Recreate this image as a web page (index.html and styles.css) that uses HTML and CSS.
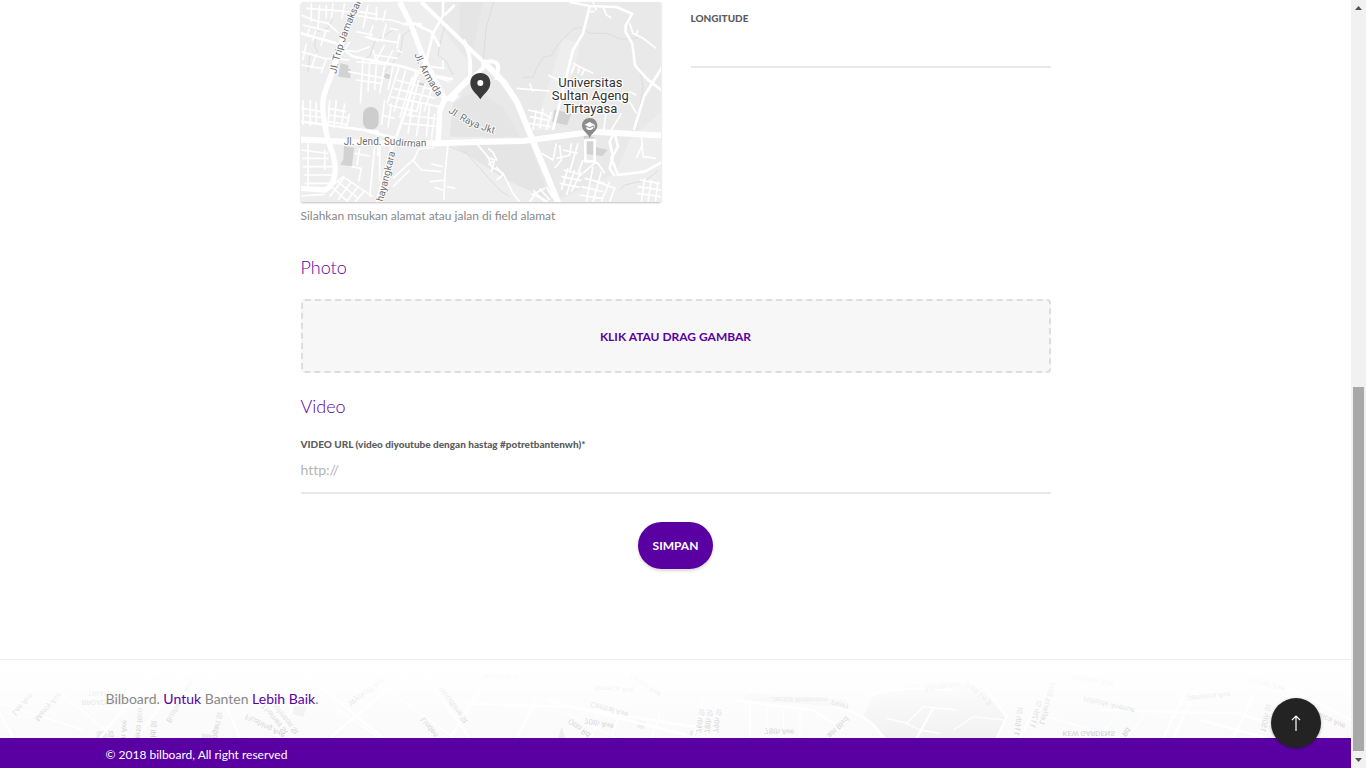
FILE: index.html
```html
<!DOCTYPE html>
<html lang="id">
<head>
<meta charset="utf-8">
<meta name="viewport" content="width=device-width, initial-scale=1">
<title>Bilboard</title>
<link rel="stylesheet" href="styles.css">
</head>
<body>
<div class="page">
  <main class="main">
    <form class="form">
      <div class="location">
        <div class="location-map">
          <svg class="map" viewBox="14 6 1080 600" preserveAspectRatio="xMidYMid slice" role="img" aria-label="Peta lokasi">
            <defs>
              <path id="p-trip" d="M120 222 Q140 118 195 6L213 -40"/>
              <path id="p-armada" d="M354 164 Q375 221 421 287L436 315"/>
              <path id="p-raya" d="M455 336 Q520 384 604 404L620 407"/>
              <path id="p-sud" d="M142 435 H290 L345 440 L420 436"/>
              <path id="p-bhay" d="M259 606 Q278 540 300 440L303 420"/>
            </defs>
            <rect x="10" y="6" width="1090" height="610" fill="#eee"/>
            <path fill="#e9e9e9" d="M375 6H1100V330L1000 420 960 520 760 610 480 330 520 190Z"/>
            <path fill="#e5e5e5" d="M490 6h70l-30 150-40-30zM470 310l70-40 80 50 50 90-210 0zM460 430h240l60 170-130-60z"/>
            <path fill="#eee" d="M800 115l50 15-15 80-50 90-10 90h-60z"/>
            <path fill="#d2d2d2" d="M132 190l24 5v12h6v28l-36-5zM268 220l16 5-4 13-20-5zM362 246l22 4-4 14-20-4zM143 438l30 5-6 56-36-5 10-15zM775 328l50 14-13 34-45-10zM862 402l32 10v28l40 10-16 18-52-6z"/>
            <rect x="200" y="321" width="47" height="68" rx="23" fill="#cdcdcd"/>
            <g class="water">
              <path d="M110 55l-15 30-35 10-5 45 10 15-25 15-5 45M290 90l-55 35-15 45-35 10M370 70l-50 35-8 55-45 55M450 65l-15 50-10 50 25 20 20 40"/>
              <path d="M592 6l-22 75-10 100M680 232l30 0 10-25 20-35 25-5 20-35 45-45 25-5 25 18 50 0 45 18 50-5M460 440l50 20 100 110 30 20M970 570l15-15 65-15 35-28M1030 200l10 60-20 130"/>
            </g>
            <g class="minor">
              <path d="M15 45l35 15 45 10 30 28M30 25l130 10M45 10v55M70 15l-5 70M90 15v40M110 10l-5 45M145 10l-8 45M20 75l80 20M40 85l-10 25M60 92l-12 30M88 95l-15 42M175 45l55 10 55 5 50 15M215 15l-15 70M240 20v42M268 30l-8 35M230 75l-12 40 30 8M270 70l-14 55M205 110l40 8 60 10M310 100l-8 45M180 95l50 10M185 35l60 8M280 85l25 5"/>
              <path d="M15 155l70 20 75 5M30 130l-10 50M60 160l-15 45M90 175l-16 45M15 195l60 10M135 150l45 5 40-15M160 125l-25 40M180 185l90 8M200 180l-8 130M220 190l-5 85M240 195l-5 75M265 195l-15 85M290 200l-15 70M155 215l110 20M180 240l75 10M230 150l10 35M265 135l-25 45M290 150l-20 40M235 165l70 10M300 150l20 8"/>
              <path d="M308 200l-35 110M328 210l-35 125M348 230l-38 125M368 240l-30 105M388 250l-28 85M408 260l-25 75M300 240l115 30M292 265l125 30M283 290l145 30M275 315l90 20M380 225l40 45M360 210l-15 45M400 200l45 5M400 225l60 20M440 180v25"/>
              <path d="M15 325l60 10M18 345l62 8M20 300v75M42 300v78M60 305v70M95 325l55 10M95 345l60 8M100 300l-5 80M120 300l-8 85M145 310l-10 72M95 365l55 8M160 340l-10 45M265 300l-10 75M285 310l-10 72M255 345l40 10M330 345l100 12M320 370l110 10M350 310l-15 90M375 310l-15 100M400 310l-10 100M415 340l-10 80"/>
              <path d="M15 450l80 10M18 475h80M20 500h90M22 525h94M25 550h80M35 430v135M85 450v60M15 588l70-5M130 380l115 14v75M235 440l-15 150M190 445l-8 50M165 500l30 5-8 40M175 460l45 8M250 435v110M270 545l-15 40M290 535l65-60 12-28 45-5M350 480l25 30 60 5M290 560l50-50M455 435l-8 75-5 90M440 500l-35-8M450 540l-50 5M440 570l-25-8M452 560l25 5"/>
              <path d="M85 575l55-45 90 60M125 545l60 50M145 530l-45 60M165 545l-40 55M185 560l-35 45M205 572l-30 35M105 560l50 45"/>
              <path d="M540 430l35 40 10 30 35 20 30 60 20 25M570 470l25 10-10 35M600 500l20 25-20 15M575 445l15 12 12 25M575 495l15-12M700 605l15-20 40 20M710 570l35 35M730 565l30 35M750 560l20 35M706 585l40-20"/>
              <path d="M695 330l45 10 25 15M700 350l60 12M698 370l65 10M720 330l-10 60M740 325l-10 60M765 335l-15 55M780 430l-10 50-35-20M790 435l5 45-20 25M825 430l-5 35-40 10M845 430l-25 85M800 450l45 10M870 480l35 10 20 30M860 480l-15 40"/>
              <path d="M802 510l55 15M795 530l60 12M790 550l60 12M815 505l-20 65M835 510l-25 75M855 515l-30 60M865 535l60 15M855 560l65 15M850 585l70 10M890 500l-20 105M915 515l-25 90M940 545l-25 60M860 520l40-35M900 545l55 20-15 40M1030 540l60 10M1025 560l70 10M1022 580l72 10M1045 535l-10 70M1065 540l-10 65M1085 545l-8 60"/>
              <path d="M755 225l50 25 35-10M660 265l100 8M700 250l10 25M830 190l20 10 40 20M835 195l-10 25M850 200l-5 20M865 208l-10 18M1000 70l10 30 30 15 40 30M1020 105l5-15M920 20l10 25 15 8M890 6l10 25M880 35h15M1035 405l5 65 40 5M1040 430l-20 45M960 300l40 5 20 35M1000 275l20 10M930 330l-8 60M975 340l-30 50"/>
            </g>
            <g class="road">
              <path d="M10 99l110 31 50 40 150 30 80 25 70 13M440 6v40l-30 55-20 80-32 50-30 100-28 80-20 50-40 150M10 364l190 26 100 25M445 45l30-30"/>
              <path d="M378 72h-60M350 70l55 25 25 45M458 295l-35 30M485 285l-20 20"/>
              <path d="M820 6l60 12 80 3 48 20-20 35 0 20 20 35 8 65 35 40 45 35M880 20l-20 80-30 50-20 80-40 160M1098 200l-55 90-30 100M955 400l10 40-20 35 20 50 80-10 55-30M955 395l-15 30 10 45-10 35 15 22"/>
              <rect x="867" y="420" width="28" height="64"/>
            </g>
            <g class="road road-wide">
              <path d="M188 6C155 75 130 130 112 205 90 270 72 290 82 350 90 410 95 420 112 470 125 530 108 560 85 570L10 565"/>
              <path d="M310 6l35 70 35 95 65 125-15 40-5 95"/>
            </g>
            <g class="road road-ramp">
              <path d="M500 120q28 40 20 110l-65 65M570 195l-115 105"/>
              <path d="M560 204q0-20 25-20 22 2 21 22-2 16-20 12M605 205l-5 35"/>
            </g>
            <path class="road road-ramp" d="M375 6l197 190"/>
            <path class="road road-main" d="M560 184l62 62 40 60 45 110 80 196"/>
            <path class="road road-main" d="M10 418l230 12h190l110-4 140-3 210-28 210 12"/>
            <g class="street">
              <text><textPath href="#p-trip">Jl. Trip Jamaksari</textPath></text>
              <text><textPath href="#p-armada">Jl. Armada</textPath></text>
              <text><textPath href="#p-raya">Jl. Raya Jkt</textPath></text>
              <text><textPath href="#p-sud">Jl. Jend. Sudirman</textPath></text>
              <text><textPath href="#p-bhay">hayangkara</textPath></text>
            </g>
            <g class="place">
              <text x="882" y="260">Universitas</text>
              <text x="882" y="299">Sultan Ageng</text>
              <text x="882" y="338">Tirtayasa</text>
            </g>
            <path fill="#8c8c8c" d="M880 354c-14 0-23 10-23 23 0 16 18 22 23 37 5-15 23-21 23-37 0-13-9-23-23-23z"/>
            <path fill="#fff" d="M880 366l-15 8 15 8 12-6v9h3v-11zM870 380v6q10 8 20 0v-6l-10 5z"/>
            <path fill="#3a3a3a" d="M552 219c-18 0-30 13-30 30 0 22 21 33 30 49 9-16 30-27 30-49 0-17-12-30-30-30z"/>
            <circle cx="552" cy="249" r="9" fill="#fff"/>
          </svg>
          <p class="hint">Silahkan msukan alamat atau jalan di field alamat</p>
        </div>
        <div class="field location-field">
          <label class="label" for="longitude">LONGITUDE</label>
          <input class="input" id="longitude" type="text">
        </div>
      </div>

      <h2 class="heading">Photo</h2>
      <button class="dropzone" type="button">KLIK ATAU DRAG GAMBAR</button>

      <h2 class="heading">Video</h2>
      <div class="field">
        <label class="label" for="video">VIDEO URL (video diyoutube dengan hastag #potretbantenwh)*</label>
        <input class="input" id="video" type="text" placeholder="http://">
      </div>
      <button class="submit" type="submit">SIMPAN</button>
    </form>
  </main>

  <footer class="footer">
    <div class="footer-top">
      <svg class="footer-map" viewBox="0 30 4053 234" preserveAspectRatio="xMidYMax slice" aria-hidden="true">
        <defs>
          <linearGradient id="fade" x1="0" y1="0" x2="0" y2="1">
            <stop offset="0" stop-color="#fff" stop-opacity="1"/>
            <stop offset="0.3" stop-color="#fff" stop-opacity="0.85"/>
            <stop offset="1" stop-color="#fff" stop-opacity="0"/>
          </linearGradient>
        </defs>
        <rect y="30" width="4053" height="234" fill="#fafafa"/>
        <path fill="#f1f1f1" d="M2620 140q80-40 220-45l110 20 70 90-30 59h-330l-70-65zM2240 130l300 20-10 20-300-20z"/>
        <path fill="#ebebeb" d="M290 243h30v21h-30zM605 250l35 5-5 9h-30zM880 165l40 5-10 30-30-8zM1685 228l10 36h-20zM1915 212l22 6-6 20-20-6zM2072 240l20 5-5 14-20-5z"/>
        <g class="footer-roads">
          <path d="M0 190l40 74M300 264l190-234M560 60l-150 204M620 30l100 234M830 264l120-234M990 264l260-220M900 60l250 204M1240 30l170 234M1440 120l-90 144M1550 264l60-120M1640 150l420 105M1400 160l300 10 380 60M2080 264l30-120M2250 150v114M2200 150l240 30 90 60M2500 170q110 20 150 94M2600 140q90-35 260-20M2950 110l70 90-30 64M2750 264l50-90M3060 264l60-120M3300 180l420 10 200 74M3490 264l80-170M3520 264l80-170M3600 210l200 54M3700 264l60-130M3860 110l193 100"/>
        </g>
        <g class="footer-roads footer-lanes">
          <path d="M0 160l250 80M160 110l180 150M720 180l120 84M1000 170l140 94M1180 130l180 134M1700 190l150 74M1800 170l-25 94M1860 180l-25 84M1980 190l-25 74M2150 160l-10 104M2300 170v94M2350 175v89M2400 180v84M2660 205l60 15 40 20 60 10M2720 220l50-50 100 10M2860 240l60-40 90 10M3140 200l220 64M3350 200l-60 64M3430 200l-50 64"/>
        </g>
        <g class="footer-names">
          <text transform="translate(68 163) rotate(-48) scale(1 -1)">Lee Ave</text>
          <text transform="translate(145 170) rotate(-48) scale(1 -1)">Marcy Ave</text>
          <text transform="translate(316 131) scale(1 -1)">TRIANGLE</text>
          <text transform="translate(305 156) scale(1 -1)">BROADWAY</text>
          <text transform="translate(332 252) rotate(-88) scale(1 -1)">St</text>
          <text transform="translate(373 238) rotate(-86) scale(1 -1)">n Ave</text>
          <text transform="translate(418 219) rotate(-85) scale(1 -1)">erto Rico</text>
          <text transform="translate(460 237) rotate(-87) scale(1 -1)">ldi St</text>
          <text transform="translate(540 155) rotate(-60) scale(1 -1)">Bushwick Ave</text>
          <text transform="translate(653 226) rotate(-80) scale(1 -1)">ogart St</text>
          <text transform="translate(795 228) rotate(28) scale(1 -1)">Flushing Ave</text>
          <text transform="translate(824 207) rotate(52) scale(1 -1)">Thames St</text>
          <text transform="translate(855 205) rotate(52) scale(1 -1)">Johnson St</text>
          <text transform="translate(1100 125) rotate(-36) scale(1 -1)">Wyckoff Ave</text>
          <text transform="translate(1288 232) rotate(52) scale(1 -1)">Linden</text>
          <text transform="translate(1360 165) rotate(54) scale(1 -1)">Woodbine St</text>
          <text transform="translate(1500 78) scale(1 -1)">Myrtle Ave</text>
          <text transform="translate(1843 117) rotate(4) scale(1 -1)">Seneca Ave</text>
          <text transform="translate(1828 178) rotate(16) scale(1 -1)">Central Ave</text>
          <text transform="translate(1797 220) rotate(12) scale(1 -1)">70th Ave</text>
          <text transform="translate(1738 234) rotate(38) scale(1 -1)">Otto Rd</text>
          <text transform="translate(1935 105) rotate(34) scale(1 -1)">Forest Ave</text>
          <text transform="translate(2100 212) rotate(-80) scale(1 -1)">76th St</text>
          <text transform="translate(2125 214) rotate(-80) scale(1 -1)">78th St</text>
          <text transform="translate(2151 212) rotate(-80) scale(1 -1)">79th St</text>
          <text transform="translate(2338 244) rotate(3) scale(1 -1)">78th Ave</text>
          <text transform="translate(2398 148) scale(1 -1)">Jackie Robinson</text>
          <text transform="translate(2520 164) rotate(24) scale(1 -1)">Pkwy</text>
          <text transform="translate(2514 231) rotate(-45) scale(1 -1)">ain Blvd</text>
          <text transform="translate(2830 109) rotate(-8) scale(1 -1)">Myrtle Ave</text>
          <text transform="translate(2935 130) rotate(42) scale(1 -1)">Park Ln S</text>
          <text transform="translate(3055 214) rotate(-82) scale(1 -1)">116th St</text>
          <text transform="translate(3107 192) rotate(-75) scale(1 -1)">117th St</text>
          <text transform="translate(3142 160) rotate(-75) scale(1 -1)">Lefferts Blvd</text>
          <text transform="translate(3328 164) rotate(14) scale(1 -1)">Hillside Avenue</text>
          <text transform="translate(3275 91) rotate(10) scale(1 -1)">Jamaica Ave</text>
          <text transform="translate(3266 249) scale(1 -1)">KEW GARDENS</text>
          <text transform="translate(3378 246) rotate(-50) scale(1 -1)">Rd</text>
          <text transform="translate(3626 139) rotate(-5) scale(1 -1)">Jamaica Ave</text>
          <text transform="translate(3800 102) rotate(16) scale(1 -1)">Archer Ave</text>
          <text transform="translate(3797 205) rotate(-78) scale(1 -1)">150th St</text>
          <text transform="translate(3975 203) rotate(24) scale(1 -1)">Jamaica Ave</text>
        </g>
        <rect y="30" width="4053" height="234" fill="url(#fade)"/>
      </svg>
      <div class="container">
        <p class="tagline">Bilboard. <a href="#">Untuk</a> Banten <a href="#">Lebih Baik</a>.</p>
      </div>
    </div>
    <div class="footer-bottom">
      <div class="container"><p class="copyright">© 2018 bilboard, All right reserved</p></div>
    </div>
  </footer>

  <button class="to-top" type="button" aria-label="Kembali ke atas">
    <svg width="10" height="16" viewBox="0 0 10 16"><path d="M5 16V1M1 5l4-4 4 4" fill="none" stroke="#fff" stroke-width="1.2"/></svg>
  </button>
</div>

<div class="scroll" aria-hidden="true">
  <svg class="scroll-arrow" width="15" height="17" viewBox="0 0 15 17"><path d="M4 10l3.500-4 3.500 4z" fill="#505050"/></svg>
  <div class="scroll-before"></div>
  <div class="scroll-thumb"></div>
  <svg class="scroll-arrow" width="15" height="17" viewBox="0 0 15 17"><path d="M4 7l3.500 4 3.500-4z" fill="#505050"/></svg>
</div>
</body>
</html>
```
FILE: styles.css
```css
* {
  box-sizing: border-box;
}

body {
  margin: 0;
  display: flex;
  min-height: 100vh;
  background: #fff;
  color: #888;
  font-family: Lato, "Open Sans", sans-serif;
  font-size: 14px;
  line-height: 20px;
}

p,
h2 {
  margin: 0;
}

a {
  color: #5a00a3;
  text-decoration: none;
}

button {
  border: 0;
  font-family: inherit;
  cursor: pointer;
}

.page {
  flex: 1;
  min-width: 0;
  display: flex;
  flex-direction: column;
}

.main {
  flex: 1;
  padding: 2px 15px 90px;
}

.form {
  max-width: 750px;
  margin: 0 auto;
  display: flex;
  flex-direction: column;
}

.location {
  display: grid;
  grid-template-columns: 1fr 1fr;
  gap: 30px;
}

.map {
  display: block;
  width: 100%;
  border-radius: 2px;
  box-shadow: 0 1px 2px rgba(0, 0, 0, 0.25);
}

.map text {
  font-family: Roboto, sans-serif;
  paint-order: stroke;
  stroke: #fff;
  stroke-linejoin: round;
}

.water {
  fill: none;
  stroke: #dcdcdc;
  stroke-width: 3px;
}

.minor {
  fill: none;
  stroke: #fff;
  stroke-width: 5px;
}

.road {
  fill: none;
  stroke: #fff;
  stroke-width: 8px;
  stroke-linejoin: round;
}

.road-ramp {
  stroke-width: 12px;
}

.road-wide {
  stroke-width: 16px;
}

.road-main {
  stroke-width: 18px;
}

.street {
  fill: #6c6c6c;
  font-size: 30px;
}

.street text {
  stroke-width: 5px;
}

.place {
  fill: #333;
  font-size: 39px;
  text-anchor: middle;
}

.place text {
  stroke-width: 8px;
}

.hint {
  margin-top: 4px;
  font-size: 12px;
}

.location-field {
  padding-top: 6px;
}

.field {
  display: flex;
  flex-direction: column;
}

.label {
  color: #5c5c5c;
  font-size: 10px;
  font-weight: 900;
}

.input {
  width: 100%;
  height: 40px;
  padding: 0 0 8px;
  border: 0;
  border-bottom: 2px solid #e8e8e8;
  border-radius: 0;
  outline: 0;
  background: transparent;
  color: #555;
  font-family: inherit;
  font-size: 14px;
}

.input::placeholder {
  color: #b4b4b4;
  font-variant-ligatures: none;
}

.heading {
  margin: 23px 0 14px;
  color: #5a00a3;
  font-size: 18px;
  font-weight: 300;
  line-height: 20px;
}

.location + .heading {
  margin: 31px 0 22px;
}

.dropzone {
  height: 74px;
  border: 2px dashed #ddd;
  border-radius: 4px;
  background: #f7f7f7;
  color: #5a00a3;
  font-size: 12px;
  font-weight: 700;
}

.heading + .field {
  margin-top: 4px;
}

.submit {
  align-self: center;
  margin-top: 28px;
  padding: 0 15px;
  height: 47px;
  border-radius: 24px;
  background: #5a00a3;
  box-shadow: 0 2px 3px rgba(0, 0, 0, 0.15);
  color: #fff;
  font-size: 12px;
  font-weight: 700;
}

.footer {
  border-top: 1px solid #eee;
}

.footer-top {
  position: relative;
  padding: 29px 0;
}

.footer-map {
  position: absolute;
  inset: 0;
  width: 100%;
  height: 100%;
}

.footer-roads {
  fill: none;
  stroke: #fff;
  stroke-width: 7px;
}

.footer-lanes {
  stroke-width: 4px;
}

.footer-names {
  fill: #cdcdcd;
  font-family: Roboto, sans-serif;
  font-size: 23px;
  text-anchor: middle;
  dominant-baseline: central;
}

.container {
  position: relative;
  max-width: 1170px;
  margin: 0 auto;
  padding: 0 15px;
}

.footer-bottom {
  padding: 7px 0 3px;
  background: #5a00a3;
}

.copyright {
  color: #fff;
  font-size: 12px;
}

.to-top {
  position: fixed;
  right: 45px;
  bottom: 20px;
  width: 50px;
  height: 50px;
  padding: 0;
  display: flex;
  align-items: center;
  justify-content: center;
  border-radius: 50%;
  background: #232323;
  box-shadow: 0 1px 3px rgba(0, 0, 0, 0.3);
}

.scroll {
  position: sticky;
  top: 0;
  display: flex;
  flex-direction: column;
  width: 15px;
  height: 100vh;
  background: #f1f1f1;
}

.scroll-arrow {
  display: block;
}

.scroll-before {
  flex: 370;
}

.scroll-thumb {
  flex: 364;
  margin: 0 2px;
  background: #a8a8a8;
}
```
